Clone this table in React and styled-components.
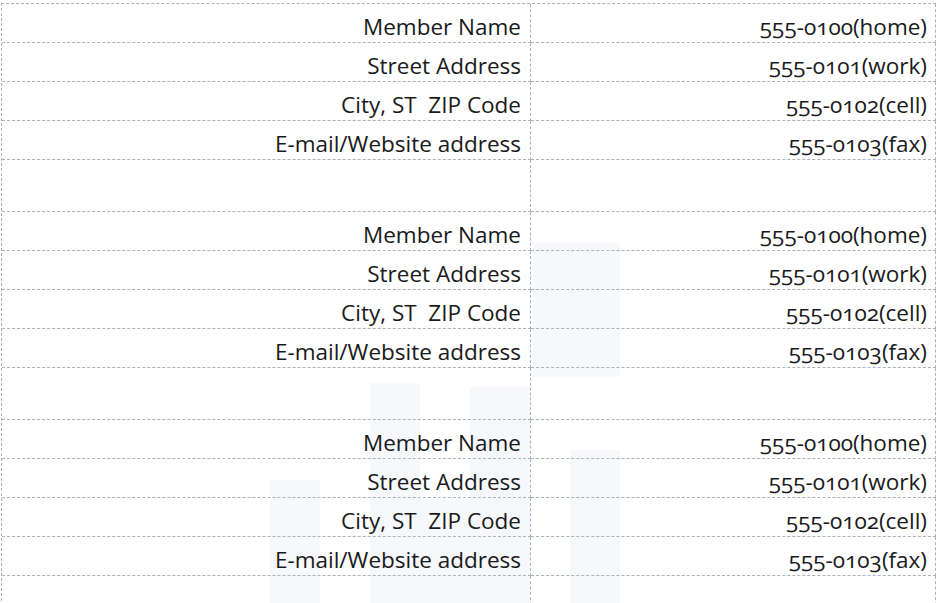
import React from "react";
import styled, { createGlobalStyle } from "styled-components";

const GlobalStyle = createGlobalStyle`
  html, body { margin: 0; padding: 0; background: #ffffff; }
  body { font-family: "Open Sans", "Noto Sans", sans-serif; }
`;

const Page = styled.div`
  position: relative;
  width: 938px;
  height: 603px;
  overflow: hidden;
  padding: 3px 0 0 1px;
  box-sizing: border-box;
`;

const Watermark = styled.svg`
  position: absolute;
  left: 0;
  top: 0;
  width: 938px;
  height: 603px;
  z-index: 0;
  pointer-events: none;
`;

const Sheet = styled.div`
  position: relative;
  z-index: 1;
  display: grid;
  grid-template-columns: 529px 405px;
  border-top: 1px dashed #a9b2bd;
  border-left: 1px dashed #a9b2bd;
  width: 934px;
`;

const Cell = styled.div`
  height: ${(p) => p.$h}px;
  box-sizing: border-box;
  border-right: 1px dashed #a9b2bd;
  border-bottom: ${(p) => (p.$last ? "none" : "1px dashed #a9b2bd")};
  display: flex;
  align-items: flex-end;
  justify-content: flex-end;
  padding: 0 ${(p) => p.$pad}px 3.5px 0;
  font-size: 22.5px;
  line-height: 1;
  color: #1a1a1a;
  white-space: nowrap;
  font-variant-numeric: oldstyle-nums;
  font-feature-settings: "onum" 1;
`;

const groups = [
  { rows: 4, blank: 52 },
  { rows: 4, blank: 52 },
  { rows: 4, blank: 40, last: true },
];

const labels = ["Member Name", "Street Address", "City, ST  ZIP Code", "E-mail/Website address"];
const phones = ["555-0100(home)", "555-0101(work)", "555-0102(cell)", "555-0103(fax)"];

export default function App() {
  const cells = [];
  groups.forEach((g, gi) => {
    labels.forEach((l, i) => {
      cells.push(
        <Cell key={`l${gi}-${i}`} $h={39} $pad={9}>
          {l.replace(/  /g, "\u00a0 ")}
        </Cell>
      );
      cells.push(
        <Cell key={`p${gi}-${i}`} $h={39} $pad={8}>
          {phones[i]}
        </Cell>
      );
    });
    cells.push(<Cell key={`bl${gi}`} $h={g.blank} $pad={9} $last={g.last} />);
    cells.push(<Cell key={`br${gi}`} $h={g.blank} $pad={8} $last={g.last} />);
  });

  return (
    <>
      <GlobalStyle />
      <Page>
        <Watermark viewBox="0 0 938 603">
          <g fill="#f6f8fc">
            <rect x="533" y="243" width="87" height="134" />
            <rect x="370" y="383" width="50" height="220" />
            <rect x="470" y="387" width="60" height="216" />
            <rect x="270" y="480" width="50" height="123" />
            <rect x="570" y="450" width="50" height="153" />
            <rect x="420" y="500" width="50" height="103" />
          </g>
        </Watermark>
        <Sheet>{cells}</Sheet>
      </Page>
    </>
  );
}
